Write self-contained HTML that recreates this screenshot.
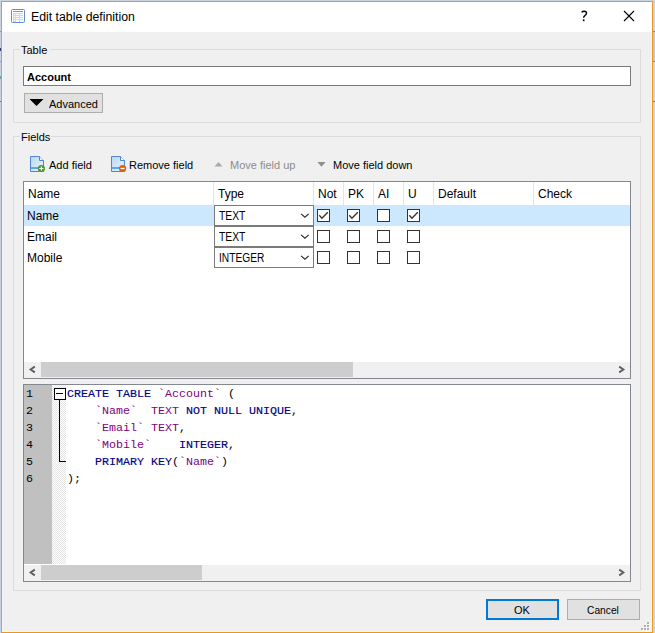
<!DOCTYPE html>
<html><head><meta charset="utf-8">
<style>
*{margin:0;padding:0;box-sizing:border-box}
html,body{width:655px;height:633px;overflow:hidden;background:#cbd3df;font-family:"Liberation Sans",sans-serif;color:#000}
.a{position:absolute}
.t{position:absolute;white-space:nowrap;font-size:12px;line-height:14px}
#win{position:absolute;left:1px;top:1px;width:652px;height:632px;border:1px solid #e8981c;background:#f0f0f0;box-shadow:inset 0 0 0 1px #f2f6fd}
#title{position:absolute;left:2px;top:2px;width:650px;height:30px;background:#fff}
.grp{position:absolute;border:1px solid #dcdcdc}
.btn{position:absolute;background:#e1e1e1;border:1px solid #adadad}
.frame{position:absolute;border:1px solid #828790;background:#fff}
.hsep{position:absolute;top:182px;width:1px;height:23px;background:#e5e5e5}
.cb{position:absolute;width:13px;height:13px;border:1px solid #333;background:#fff}
.combo{position:absolute;left:214px;width:100px;height:21px;border:1px solid #7a7a7a;background:#fff}
.sb{position:absolute;background:#f0f0f0}
.thumb{position:absolute;background:#cdcdcd}
.code{position:absolute;font-family:"Liberation Mono",monospace;font-size:11.67px;line-height:17px;white-space:pre}
.k{color:#000080;-webkit-text-stroke:0.15px #000080}
.p{color:#800080}
.ln{position:absolute;left:27px;font-family:"Liberation Mono",monospace;font-size:11.67px;line-height:17px;color:#000}
</style></head><body>
<div class="a" style="left:653px;top:0;width:2px;height:31px;background:#cdd4de"></div>
<div class="a" style="left:653px;top:31px;width:2px;height:1px;background:#8a8a8a"></div>
<div class="a" style="left:653px;top:32px;width:2px;height:29px;background:#c3c5c8"></div>
<div class="a" style="left:653px;top:61px;width:2px;height:1px;background:#8a8a8a"></div>
<div class="a" style="left:653px;top:62px;width:2px;height:571px;background:#d3d4d6"></div>
<div class="a" style="left:653px;top:101px;width:2px;height:1px;background:#7a7a7a"></div>
<div class="a" style="left:0;top:31px;width:1px;height:1px;background:#9a9a9a"></div>
<div class="a" style="left:0;top:48px;width:1px;height:3px;background:#303a7a"></div>
<div class="a" style="left:0;top:61px;width:1px;height:1px;background:#9a9a9a"></div>
<div class="a" style="left:0;top:76px;width:1px;height:3px;background:#7a9ab0"></div>
<div class="a" style="left:0;top:101px;width:1px;height:1px;background:#707070"></div>
<div id="win"></div>
<div id="title"></div>
<!-- title icon -->
<svg class="a" style="left:10px;top:8px" width="16" height="16" viewBox="0 0 16 16">
 <rect x="1.5" y="1.5" width="13" height="13" rx="1" fill="#fff" stroke="#5e8fd6"/>
 <rect x="3" y="3" width="10" height="1" fill="#6fb56f"/>
 <rect x="3" y="5" width="10" height="9" fill="#c9d9f1"/>
 <g fill="#fff"><rect x="4" y="6" width="1" height="1"/><rect x="4" y="8" width="1" height="1"/><rect x="4" y="10" width="1" height="1"/><rect x="4" y="12" width="1" height="1"/>
 <rect x="6" y="6" width="3" height="1"/><rect x="6" y="8" width="3" height="1"/><rect x="6" y="10" width="3" height="1"/><rect x="6" y="12" width="3" height="2"/>
 <rect x="10" y="6" width="3" height="1"/><rect x="10" y="8" width="3" height="1"/><rect x="10" y="10" width="3" height="1"/><rect x="10" y="12" width="3" height="2"/></g>
</svg>
<div class="t" style="left:31px;top:10px;font-size:12.3px">Edit table definition</div>
<svg class="a" style="left:577px;top:8px" width="15" height="16" viewBox="0 0 15 16"><path d="M4.6 4.4C5.3 3.5 6.3 3.3 7.3 3.3C8.8 3.3 9.5 4.3 9.5 5.3C9.5 6.5 8.5 7.2 7.6 7.9C6.9 8.5 6.6 9 6.6 9.8" fill="none" stroke="#000" stroke-width="1.4"/><circle cx="6.7" cy="12.3" r="0.95" fill="#000"/></svg>
<svg class="a" style="left:623px;top:10px" width="12" height="12" viewBox="0 0 12 12"><path d="M1 1L11 11M11 1L1 11" stroke="#000" stroke-width="1.1"/></svg>

<!-- Table group -->
<div class="grp" style="left:13px;top:49px;width:628px;height:74px"></div>
<div class="a" style="left:20px;top:45px;width:30px;height:8px;background:#f0f0f0"></div>
<div class="t" style="left:21px;top:43px;font-size:11px">Table</div>
<div class="a" style="left:23px;top:66px;width:608px;height:20px;border:1px solid #7a7a7a;background:#fff"></div>
<div class="t" style="left:27px;top:70px;font-size:11px;font-weight:bold">Account</div>
<div class="btn" style="left:24px;top:93px;width:79px;height:20px"></div>
<svg class="a" style="left:29px;top:98px" width="16" height="10" viewBox="0 0 16 10"><path d="M0.5 1H14.5L7.5 8Z" fill="#000"/></svg>
<div class="t" style="left:49px;top:97px;font-size:11px">Advanced</div>

<!-- Fields group -->
<div class="grp" style="left:13px;top:136px;width:628px;height:455px"></div>
<div class="a" style="left:20px;top:131px;width:31px;height:10px;background:#f0f0f0"></div>
<div class="t" style="left:21px;top:130px;font-size:11px">Fields</div>

<!-- toolbar -->
<svg class="a" style="left:29px;top:155px" width="18" height="18" viewBox="0 0 18 18">
 <defs><linearGradient id="pg" x1="0" y1="0" x2="1" y2="1"><stop offset="0" stop-color="#b9d6f7"/><stop offset="1" stop-color="#eef5fd"/></linearGradient></defs>
 <path d="M1.5 1.5H10.5L14.5 5.5V16.5H1.5Z" fill="url(#pg)" stroke="#4f86d4"/>
 <path d="M10.5 1.5V5.5H14.5" fill="#fff" stroke="#4f86d4"/>
 <rect x="2" y="12" width="12" height="2" fill="#5aa8ee"/>
 <circle cx="12.4" cy="13.5" r="3.6" fill="#4a9a36"/>
 <path d="M12.4 11.4V15.6M10.3 13.5H14.5" stroke="#fff" stroke-width="1.2"/>
</svg>
<div class="t" style="left:49px;top:158px;font-size:11px">Add field</div>
<svg class="a" style="left:110px;top:155px" width="18" height="18" viewBox="0 0 18 18">
 <path d="M1.5 1.5H10.5L14.5 5.5V16.5H1.5Z" fill="url(#pg)" stroke="#4f86d4"/>
 <path d="M10.5 1.5V5.5H14.5" fill="#fff" stroke="#4f86d4"/>
 <rect x="2" y="12" width="12" height="2" fill="#5aa8ee"/>
 <circle cx="12.6" cy="13.5" r="3.6" fill="#e0600f"/>
 <path d="M10.6 13.5H14.6" stroke="#fff" stroke-width="1.3"/>
</svg>
<div class="t" style="left:129px;top:158px;font-size:11px">Remove field</div>
<svg class="a" style="left:214px;top:161px" width="9" height="7" viewBox="0 0 9 7"><path d="M0.5 5.5L4.5 1L8.5 5.5Z" fill="#a8a8a8"/></svg>
<div class="t" style="left:230px;top:158px;font-size:11px;color:#8c8c8c">Move field up</div>
<svg class="a" style="left:317px;top:161px" width="9" height="7" viewBox="0 0 9 7"><path d="M0.5 1H8.5L4.5 5.8Z" fill="#8f8f8f"/></svg>
<div class="t" style="left:333px;top:158px;font-size:11px">Move field down</div>

<!-- table -->
<div class="frame" style="left:23px;top:181px;width:608px;height:198px"></div>
<div class="a" style="left:24px;top:205px;width:606px;height:21px;background:#cce8ff"></div>
<div class="hsep" style="left:213px"></div>
<div class="hsep" style="left:313px"></div>
<div class="hsep" style="left:343px"></div>
<div class="hsep" style="left:373px"></div>
<div class="hsep" style="left:403px"></div>
<div class="hsep" style="left:433px"></div>
<div class="hsep" style="left:533px"></div>
<div class="t" style="left:28px;top:187px">Name</div>
<div class="t" style="left:218px;top:187px">Type</div>
<div class="t" style="left:318px;top:187px">Not</div>
<div class="t" style="left:348px;top:187px">PK</div>
<div class="t" style="left:378px;top:187px">AI</div>
<div class="t" style="left:408px;top:187px">U</div>
<div class="t" style="left:438px;top:187px">Default</div>
<div class="t" style="left:538px;top:187px">Check</div>

<div class="t" style="left:27px;top:209px">Name</div>
<div class="t" style="left:27px;top:230px">Email</div>
<div class="t" style="left:27px;top:251px">Mobile</div>

<div class="combo" style="top:205px"></div>
<div class="combo" style="top:226px"></div>
<div class="combo" style="top:247px"></div>
<div class="t" style="left:219px;top:209px;transform:scaleX(0.86);transform-origin:0 0">TEXT</div>
<div class="t" style="left:219px;top:230px;transform:scaleX(0.86);transform-origin:0 0">TEXT</div>
<div class="t" style="left:219px;top:251px;transform:scaleX(0.85);transform-origin:0 0">INTEGER</div>
<svg class="a" style="left:300px;top:212px" width="10" height="7" viewBox="0 0 10 7"><path d="M1.1 1.9L4.9 5.3L8.7 1.9" fill="none" stroke="#2a2a2a" stroke-width="1.15"/></svg>
<svg class="a" style="left:300px;top:233px" width="10" height="7" viewBox="0 0 10 7"><path d="M1.1 1.9L4.9 5.3L8.7 1.9" fill="none" stroke="#2a2a2a" stroke-width="1.15"/></svg>
<svg class="a" style="left:300px;top:254px" width="10" height="7" viewBox="0 0 10 7"><path d="M1.1 1.9L4.9 5.3L8.7 1.9" fill="none" stroke="#2a2a2a" stroke-width="1.15"/></svg>

<div class="cb" style="left:317px;top:209px"></div>
<div class="cb" style="left:347px;top:209px"></div>
<div class="cb" style="left:377px;top:209px"></div>
<div class="cb" style="left:407px;top:209px"></div>
<div class="cb" style="left:317px;top:230px"></div>
<div class="cb" style="left:347px;top:230px"></div>
<div class="cb" style="left:377px;top:230px"></div>
<div class="cb" style="left:407px;top:230px"></div>
<div class="cb" style="left:317px;top:251px"></div>
<div class="cb" style="left:347px;top:251px"></div>
<div class="cb" style="left:377px;top:251px"></div>
<div class="cb" style="left:407px;top:251px"></div>
<svg class="a" style="left:317px;top:209px" width="13" height="13" viewBox="0 0 13 13"><path d="M2.3 6.3L4.9 9.2L10.8 3.2" fill="none" stroke="#333" stroke-width="1.3"/></svg>
<svg class="a" style="left:347px;top:209px" width="13" height="13" viewBox="0 0 13 13"><path d="M2.3 6.3L4.9 9.2L10.8 3.2" fill="none" stroke="#333" stroke-width="1.3"/></svg>
<svg class="a" style="left:407px;top:209px" width="13" height="13" viewBox="0 0 13 13"><path d="M2.3 6.3L4.9 9.2L10.8 3.2" fill="none" stroke="#333" stroke-width="1.3"/></svg>

<!-- table scrollbar -->
<div class="sb" style="left:24px;top:362px;width:606px;height:16px"></div>
<div class="thumb" style="left:41px;top:362px;width:312px;height:15px"></div>
<svg class="a" style="left:28px;top:365px" width="9" height="9" viewBox="0 0 9 9"><path d="M6.8 1.6L2.6 4.5L6.8 7.4" fill="none" stroke="#606060" stroke-width="1.9"/></svg>
<svg class="a" style="left:617px;top:365px" width="9" height="9" viewBox="0 0 9 9"><path d="M2.2 1.6L6.4 4.5L2.2 7.4" fill="none" stroke="#606060" stroke-width="1.9"/></svg>

<!-- editor -->
<div class="frame" style="left:23px;top:384px;width:608px;height:198px"></div>
<div class="a" style="left:24px;top:385px;width:28px;height:179px;background:#c0c0c0"></div>
<div class="a" style="left:52px;top:385px;width:14px;height:179px;background-color:#fff;background-image:linear-gradient(45deg,#e4e4e4 25%,transparent 25%,transparent 75%,#e4e4e4 75%),linear-gradient(45deg,#e4e4e4 25%,transparent 25%,transparent 75%,#e4e4e4 75%);background-size:2px 2px;background-position:0 0,1px 1px"></div>
<svg class="a" style="left:52px;top:385px" width="15" height="100" viewBox="0 0 15 100" shape-rendering="crispEdges">
 <rect x="2.5" y="3.5" width="11" height="11" fill="#fff" stroke="#000"/>
 <path d="M4 8.5H11" stroke="#000"/>
 <path d="M7.5 14.5V76.5H14" fill="none" stroke="#000"/>
</svg>
<div class="ln" style="top:386px;left:26px">1<br>2<br>3<br>4<br>5<br>6</div>
<div class="code" style="left:67px;top:386px"><span class="k">CREATE TABLE</span> <span class="p">`Account`</span> (
    <span class="p">`Name`</span>  <span class="p">TEXT</span> <span class="k">NOT NULL UNIQUE</span>,
    <span class="p">`Email`</span> <span class="p">TEXT</span>,
    <span class="p">`Mobile`</span>    <span class="k">INTEGER</span>,
    <span class="k">PRIMARY KEY</span>(<span class="p">`Name`</span>)
);</div>
<div class="sb" style="left:24px;top:565px;width:606px;height:16px"></div>
<div class="thumb" style="left:41px;top:565px;width:161px;height:15px"></div>
<svg class="a" style="left:28px;top:568px" width="9" height="9" viewBox="0 0 9 9"><path d="M6.8 1.6L2.6 4.5L6.8 7.4" fill="none" stroke="#606060" stroke-width="1.9"/></svg>
<svg class="a" style="left:617px;top:568px" width="9" height="9" viewBox="0 0 9 9"><path d="M2.2 1.6L6.4 4.5L2.2 7.4" fill="none" stroke="#606060" stroke-width="1.9"/></svg>

<!-- size grip -->
<svg class="a" style="left:640px;top:621px" width="10" height="10" viewBox="0 0 10 10" shape-rendering="crispEdges">
 <g fill="#fafafa"><rect x="8" y="2" width="2" height="2"/><rect x="5" y="5" width="2" height="2"/><rect x="8" y="5" width="2" height="2"/><rect x="2" y="8" width="2" height="2"/><rect x="5" y="8" width="2" height="2"/><rect x="8" y="8" width="2" height="2"/></g>
 <g fill="#b0b0b0"><rect x="7" y="1" width="2" height="2"/><rect x="4" y="4" width="2" height="2"/><rect x="7" y="4" width="2" height="2"/><rect x="1" y="7" width="2" height="2"/><rect x="4" y="7" width="2" height="2"/><rect x="7" y="7" width="2" height="2"/></g>
</svg>
<!-- buttons -->
<div class="btn" style="left:486px;top:599px;width:73px;height:21px;border:2px solid #0078d7"></div>
<div class="t" style="left:514px;top:603px;font-size:11px">OK</div>
<div class="btn" style="left:567px;top:599px;width:73px;height:21px"></div>
<div class="t" style="left:587px;top:603px;font-size:11px;transform:scaleX(0.93);transform-origin:0 0">Cancel</div>
</body></html>
